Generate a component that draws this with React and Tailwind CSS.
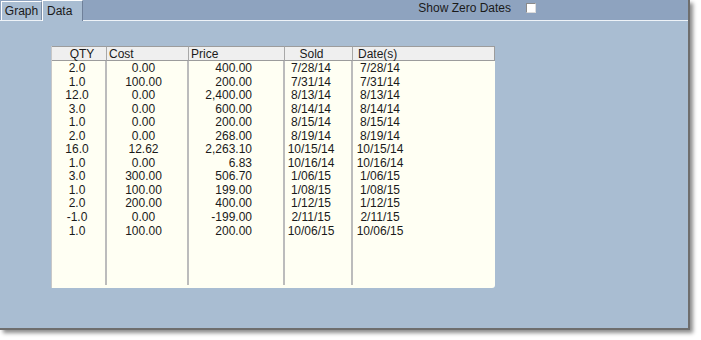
const rows = [
  ["2.0", "0.00", "400.00", "7/28/14", "7/28/14"],
  ["1.0", "100.00", "200.00", "7/31/14", "7/31/14"],
  ["12.0", "0.00", "2,400.00", "8/13/14", "8/13/14"],
  ["3.0", "0.00", "600.00", "8/14/14", "8/14/14"],
  ["1.0", "0.00", "200.00", "8/15/14", "8/15/14"],
  ["2.0", "0.00", "268.00", "8/19/14", "8/19/14"],
  ["16.0", "12.62", "2,263.10", "10/15/14", "10/15/14"],
  ["1.0", "0.00", "6.83", "10/16/14", "10/16/14"],
  ["3.0", "300.00", "506.70", "1/06/15", "1/06/15"],
  ["1.0", "100.00", "199.00", "1/08/15", "1/08/15"],
  ["2.0", "200.00", "400.00", "1/12/15", "1/12/15"],
  ["-1.0", "0.00", "-199.00", "2/11/15", "2/11/15"],
  ["1.0", "100.00", "200.00", "10/06/15", "10/06/15"],
];

const columns = [
  { title: "QTY", width: "w-[55px]", head: "text-center pl-[6px]", cell: "text-center pr-[3px]" },
  { title: "Cost", width: "w-[82px]", head: "text-left pl-[2px]", cell: "text-center pr-[7px]" },
  { title: "Price", width: "w-[96px]", head: "text-left pl-[2px]", cell: "text-right pr-[31px]" },
  { title: "Sold", width: "w-[68px]", head: "text-center pr-[14px]", cell: "text-center pr-[14px]" },
  { title: "Date(s)", width: "flex-1", head: "text-left pl-[5px]", cell: "text-center w-[54px]" },
];

export default function App() {
  return (
    <div className="w-[701px] h-[340px] bg-white font-['Liberation_Sans',Arial,sans-serif] text-[12px] text-[#1a1a1a]">
      <div className="w-[690px] h-[330px] flex flex-col bg-[#a9bdd2] border-r-2 border-b-2 border-[#6e6e6e] shadow-[3px_3px_4px_rgba(0,0,0,0.45)]">
        {/* Tab bar */}
        <div className="h-[21px] flex items-end bg-[#8ea3bf] border-b border-[#eef3f8]">
          <div className="h-[19px] w-[41px] ml-px flex items-center justify-center bg-[#a9bdd2] border-t border-l border-white border-r border-r-[#7d8ea6]">
            Graph
          </div>
          <div className="relative -mb-px h-[21px] w-[41px] flex items-center pl-[4px] bg-[#a9bdd2] border-t border-l border-white border-r border-r-[#6f8099]">
            Data
          </div>
          <div className="ml-auto mr-[152px] mb-[3px] h-[18px] flex items-center gap-[15px]">
            <span>Show Zero Dates</span>
            <span className="w-[10px] h-[10px] bg-white border border-[#8a8a8a] border-r-[#dcdcdc] border-b-[#dcdcdc]"></span>
          </div>
        </div>

        {/* Body */}
        <div className="flex-1 pt-[25px] pl-[51px]">
          <div className="w-[444px] h-[242px] flex bg-[#fffff3] border-l border-[#c8c8c8] rounded-br-[3px]">
            {columns.map((col, ci) => (
              <div key={col.title} className={`${col.width} flex flex-col`}>
                <div
                  className={`h-[15px] leading-[14px] bg-[#efefef] border-t border-b border-[#9c9c9c] ${
                    ci < columns.length - 1 ? "border-r border-r-[#a8a8a8]" : "border-r border-r-[#9c9c9c]"
                  } ${col.head}`}
                >
                  {col.title}
                </div>
                <div
                  className={`flex-1 mb-[3px] pt-[1px] ${
                    ci < columns.length - 1 ? "border-r-2 border-[#bcbcbc]" : ""
                  }`}
                >
                  {rows.map((r, ri) => (
                    <div key={ri} className={`h-[13.55px] leading-[13.55px] ${col.cell}`}>
                      {r[ci]}
                    </div>
                  ))}
                </div>
              </div>
            ))}
          </div>
        </div>
      </div>
    </div>
  );
}
